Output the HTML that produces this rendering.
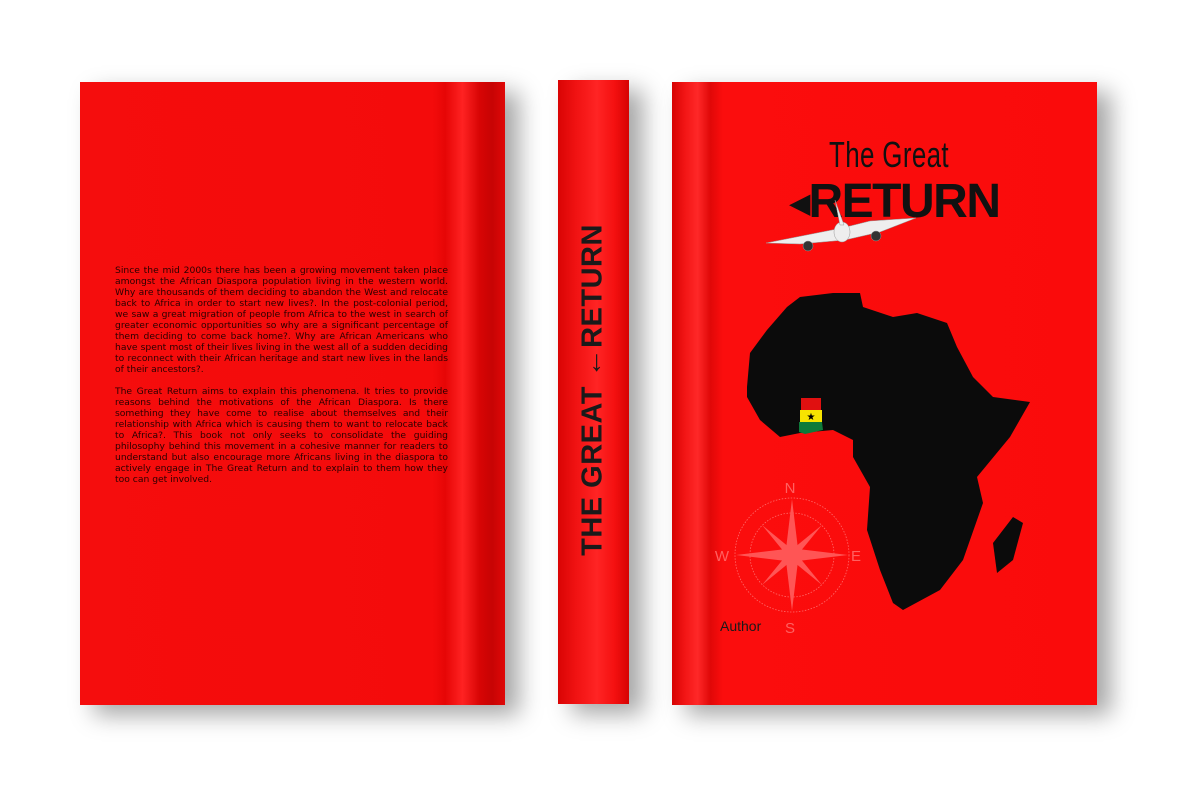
<!DOCTYPE html>
<html><head><meta charset="utf-8"><style>
*{margin:0;padding:0;box-sizing:border-box}
body{width:1200px;height:800px;background:#fff;position:relative;overflow:hidden;font-family:"Liberation Sans",sans-serif}
.book{position:absolute;background:#f80c0c;box-shadow:14px 10px 22px rgba(0,0,0,.35)}
#back{left:80px;top:82px;width:425px;height:623px;background:linear-gradient(90deg,#f50d0d 0%,#f40b0b 83%,#e60606 86%,#ff2222 90%,#d80505 94%,#c70404 97%,#e00808 100%)}
#spine{left:558px;top:80px;width:71px;height:624px;background:linear-gradient(90deg,#d90404 0%,#f01212 25%,#ff2424 55%,#f41010 80%,#d60303 100%)}
#front{left:672px;top:82px;width:425px;height:623px;background:linear-gradient(90deg,#d60303 0%,#f21515 3%,#ff2828 6%,#e00808 9%,#fb0d0d 12%,#fa0b0b 100%)}
.txt{position:absolute;left:35px;top:183px;width:333px;font-family:"DejaVu Sans",sans-serif;font-size:9.2px;line-height:11px;color:#2a0000;text-align:justify}
.txt p{margin-bottom:11px}
.sp{position:absolute;left:35px;top:310px;transform:translate(-50%,-50%) rotate(-90deg);white-space:nowrap;font-weight:bold;font-size:29px;color:#1a1a1a;letter-spacing:.5px}
.tg{position:absolute;left:157px;top:52px;font-family:"Liberation Sans Narrow","Liberation Sans",sans-serif;font-size:36px;color:#111;transform:scaleX(.72);transform-origin:left top;letter-spacing:.5px}
.ret{position:absolute;left:118px;top:96px;font-weight:bold;font-size:48px;color:#111;letter-spacing:-1.5px;line-height:48px}
.au{position:absolute;left:48px;top:536px;font-size:14px;color:#1a1a1a}
</style></head><body>
<div class="book" id="back"><div class="txt"><p>Since the mid 2000s there has been a growing movement taken place amongst the African Diaspora population living in the western world. Why are thousands of them deciding to abandon the West and relocate back to Africa in order to start new lives?. In the post-colonial period, we saw a great migration of people from Africa to the west in search of greater economic opportunities so why are a significant percentage of them deciding to come back home?. Why are African Americans who have spent most of their lives living in the west all of a sudden deciding to reconnect with their African heritage and start new lives in the lands of their ancestors?.</p><p>The Great Return aims to explain this phenomena. It tries to provide reasons behind the motivations of the African Diaspora. Is there something they have come to realise about themselves and their relationship with Africa which is causing them to want to relocate back to Africa?. This book not only seeks to consolidate the guiding philosophy behind this movement in a cohesive manner for readers to understand but also encourage more Africans living in the diaspora to actively engage in The Great Return and to explain to them how they too can get involved.</p></div></div>
<div class="book" id="spine"><div class="sp">THE GREAT ←RETURN</div></div>
<div class="book" id="front">
<div class="tg">The Great</div>
<div class="ret"><span style="font-size:26px;vertical-align:5px">&#9664;</span>RETURN</div>
<svg width="425" height="623" style="position:absolute;left:0;top:0" viewBox="672 82 425 623">
<g fill="#eee" stroke="#999" stroke-width=".5">
<path d="M766 243 L842 228 L870 221 L916 218 L880 232 L845 240 L800 244Z"/>
<ellipse cx="842" cy="232" rx="8" ry="10"/>
<circle cx="808" cy="246" r="5" fill="#333"/><circle cx="876" cy="236" r="5" fill="#333"/>
<path d="M835 200 L840 225 L844 225Z"/>
</g>
<path fill="#0b0b0b" d="M747 387 L750 353 L767 330 L787 307 L800 297 L833 293 L860 293 L863 307 L893 317 L917 313 L947 323 L957 347 L973 377 L993 397 L1030 402 L1010 437 L977 477 L983 503 L963 560 L940 590 L903 610 L893 603 L880 570 L867 530 L870 487 L853 457 L853 440 L833 430 L800 433 L780 437 L760 420 L747 397Z"/>
<path fill="#0b0b0b" d="M1013 517 L1023 523 L1013 560 L997 573 L993 543Z"/>
<rect x="801" y="398" width="20" height="12" fill="#e01010"/>
<rect x="800" y="410" width="22" height="12" fill="#f7e400"/>
<path d="M799 422 L822 422 L823 430 L805 434 L799 432Z" fill="#0e7a3a"/>
<text x="811" y="420" font-size="10" text-anchor="middle" fill="#000">★</text>
<g fill="none" stroke="#ff6a6a" stroke-width=".8" stroke-dasharray="1.5 1.5">
<circle cx="792" cy="555" r="57"/><circle cx="792" cy="555" r="42"/></g>
<g fill="#ff5555">
<path d="M792 499 L798 549 L848 555 L798 561 L792 611 L786 561 L736 555 L786 549Z"/>
<path d="M762 525 L795 552 L822 585 L789 558Z M822 525 L795 558 L762 585 L789 552Z"/>
</g>
<g fill="#ff6060" font-family="Liberation Sans" font-size="15" text-anchor="middle">
<text x="790" y="493">N</text><text x="722" y="561">W</text><text x="856" y="561">E</text><text x="790" y="633">S</text></g>
</svg>
<div class="au">Author</div>
</div>
</body></html>
